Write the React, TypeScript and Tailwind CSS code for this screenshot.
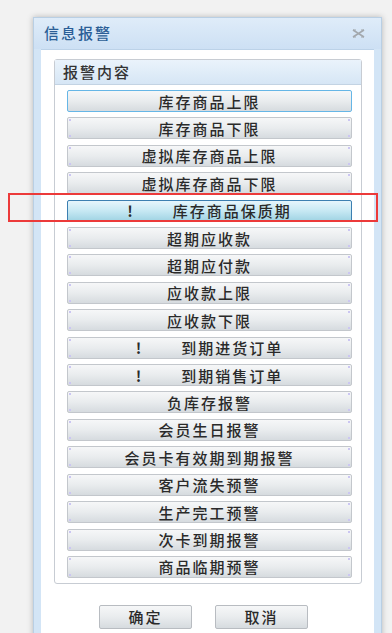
import React from 'react';

interface AlarmItem {
  label: string;
  bang?: boolean;
}

const items: AlarmItem[] = [
  { label: '库存商品上限' },
  { label: '库存商品下限' },
  { label: '虚拟库存商品上限' },
  { label: '虚拟库存商品下限' },
  { label: '库存商品保质期', bang: true },
  { label: '超期应收款' },
  { label: '超期应付款' },
  { label: '应收款上限' },
  { label: '应收款下限' },
  { label: '到期进货订单', bang: true },
  { label: '到期销售订单', bang: true },
  { label: '负库存报警' },
  { label: '会员生日报警' },
  { label: '会员卡有效期到期报警' },
  { label: '客户流失预警' },
  { label: '生产完工预警' },
  { label: '次卡到期报警' },
  { label: '商品临期预警' },
];

const font = { fontFamily: '"Noto Sans CJK SC", "Noto Sans", sans-serif' };

const AlarmButton: React.FC<{ item: AlarmItem; index: number }> = ({ item, index }) => {
  const selected = index === 4;
  const focused = index === 0;
  const base = 'relative h-[22px] w-full flex items-center justify-center rounded-[2px] text-[15px] tracking-[2px] text-[#2a2a2a] font-medium leading-none';
  const look = selected
    ? 'bg-gradient-to-b from-[#e6f5fc] via-[#c6e8f3] to-[#9fd3e3] border border-[#3c7fb1]'
    : focused
      ? 'bg-gradient-to-b from-[#f6f7f8] via-[#e9ecee] to-[#d6dbdf] border border-[#66b6e6]'
      : 'bg-gradient-to-b from-[#f6f7f8] via-[#e9ecee] to-[#d6dbdf] border border-[#c3c7cc]';

  return (
    <button className={`${base} ${look}`}>
      {!selected && !focused && (
        <>
          <span className="absolute left-[1px] top-[1px] w-[2px] h-[2px] bg-[#cbc6f2]" />
          <span className="absolute right-[1px] top-[1px] w-[2px] h-[2px] bg-[#cbc6f2]" />
          <span className="absolute left-[1px] bottom-[1px] w-[2px] h-[2px] bg-[#cbc6f2]" />
          <span className="absolute right-[1px] bottom-[1px] w-[2px] h-[2px] bg-[#cbc6f2]" />
        </>
      )}
      {item.bang ? (
        <span className="flex items-center">
          <span className="font-bold tracking-normal">!</span>
          <span className="w-[40px]" />
          <span>{item.label}</span>
        </span>
      ) : (
        <span>{item.label}</span>
      )}
    </button>
  );
};

const App: React.FC = () => {
  return (
    <div className="relative w-[392px] h-[633px] overflow-hidden bg-[#f2f2f2]" style={font}>
      {/* Dialog window */}
      <div className="ml-[33px] mt-[17px] w-[349px] h-[640px] flex flex-col bg-[#d3e5f6] border border-[#b9cfe4] shadow-[0_0_6px_rgba(0,0,0,0.25)]">
        {/* Title bar */}
        <div className="h-[31px] flex items-center justify-between pl-[10px] pr-[16px] bg-gradient-to-b from-[#dfecf9] to-[#cde0f4]">
          <span className="text-[15px] tracking-[2px] font-medium text-[#2b5e96]">信息报警</span>
          <svg width="13" height="9" viewBox="0 0 13 9">
            <path d="M1 1 L12 8 M12 1 L1 8" stroke="#a3a8ad" strokeWidth="1.6" />
            <path d="M1 1 h3 M9 1 h3 M1 8 h3 M9 8 h3" stroke="#a3a8ad" strokeWidth="1" />
          </svg>
        </div>

        {/* Body */}
        <div className="flex-1 mx-[7px] bg-white border-t border-[#bcd2e8] flex flex-col">
          {/* Group box */}
          <div className="mt-[9px] ml-[13px] mr-[12px] border border-[#c7ccd3] rounded-[3px] flex flex-col">
            <div className="h-[25px] flex items-center pl-[8px] bg-gradient-to-b from-[#eaf3fb] to-[#d6e6f5] border-b border-[#c3d3e3] text-[15px] tracking-[2px] font-medium text-[#333]">
              报警内容
            </div>
            <div className="flex flex-col gap-[5.41px] pl-[12px] pr-[9px] pt-[5px] pb-[5px]">
              {items.map((item, i) => (
                <AlarmButton key={item.label} item={item} index={i} />
              ))}
            </div>
          </div>

          {/* Footer buttons */}
          <div className="flex gap-[23px] pl-[58px] mt-[21px]">
            <button className="w-[93px] h-[24px] rounded-[2px] border border-[#b8bcc1] bg-gradient-to-b from-[#f6f7f8] via-[#e9ecee] to-[#d6dbdf] text-[15px] tracking-[2px] font-medium text-[#2a2a2a]">
              确定
            </button>
            <button className="w-[93px] h-[24px] rounded-[2px] border border-[#b8bcc1] bg-gradient-to-b from-[#f6f7f8] via-[#e9ecee] to-[#d6dbdf] text-[15px] tracking-[2px] font-medium text-[#2a2a2a]">
              取消
            </button>
          </div>
        </div>
      </div>

      {/* Red annotation frame */}
      <div className="absolute left-[8px] top-[193px] w-[370px] h-[29px] border-2 border-[#ec3a3a]" />
    </div>
  );
};

export default App;
